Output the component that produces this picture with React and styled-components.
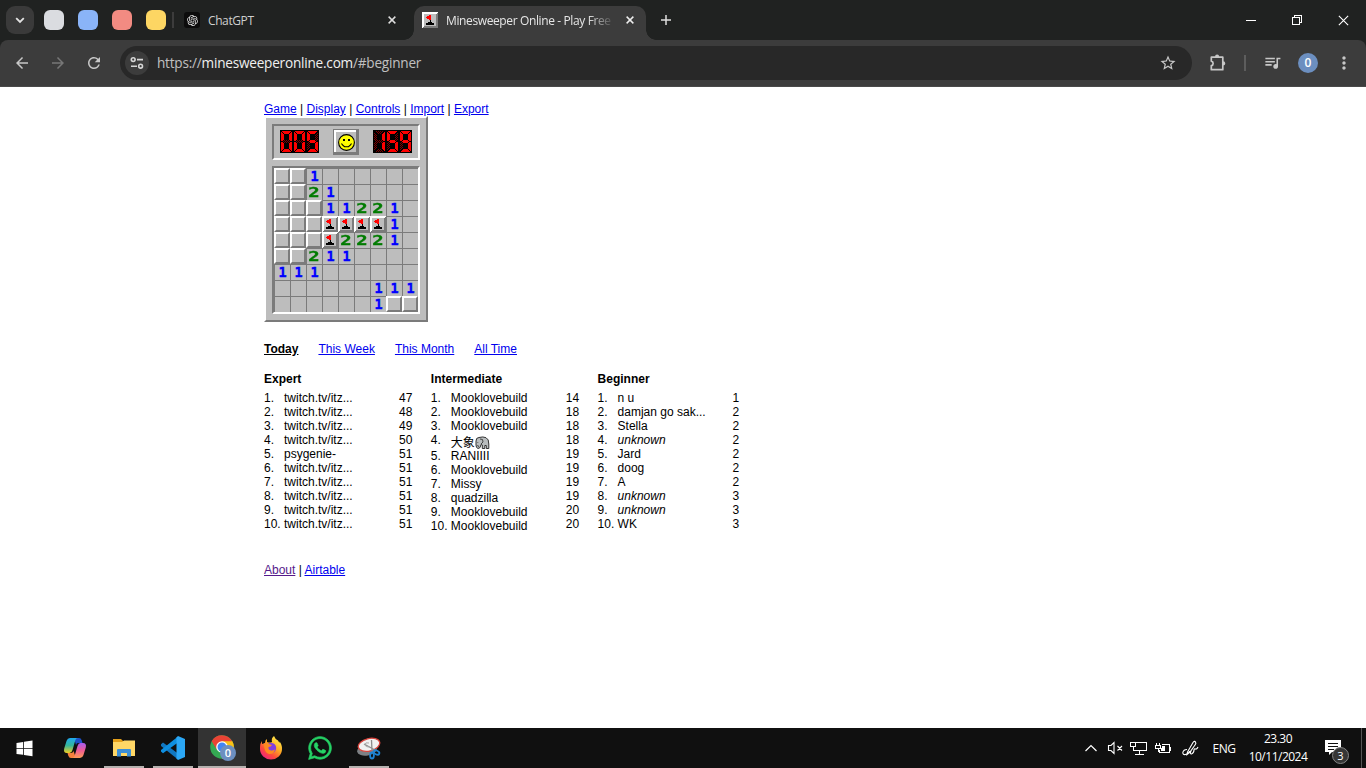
import React from 'react';
import styled, { createGlobalStyle, css } from 'styled-components';
import { MdArrowBack, MdArrowForward, MdRefresh, MdStarBorder, MdQueueMusic, MdMoreVert } from 'react-icons/md';
import { RiOpenaiFill } from 'react-icons/ri';
import { FaWhatsapp } from 'react-icons/fa';

const GlobalStyle = createGlobalStyle`
  * { box-sizing: border-box; }
  body { margin: 0; background: #fff; overflow: hidden; }
  svg { display: block; flex: none; }
`;

const UI = '"Open Sans", "Noto Sans", sans-serif';
const ARIAL = '"Liberation Sans", "Noto Sans CJK SC", sans-serif';

const Screen = styled.div`
  display: flex;
  flex-direction: column;
  width: 1366px;
  height: 768px;
  overflow: hidden;
`;

/* ---------- Tab strip ---------- */
const TabStrip = styled.header`
  display: flex;
  align-items: center;
  height: 40px;
  background: #202221;
  padding-left: 6px;
  font-family: ${UI};
  color: #dcdcdc;
`;
const TabSearch = styled.button`
  display: grid;
  place-items: center;
  width: 28px;
  height: 28px;
  border: 0;
  padding: 0;
  border-radius: 9px;
  background: #3a3a3a;
  margin-right: 10px;
`;
const TabGroup = styled.span`
  width: 20px;
  height: 20px;
  border-radius: 6px;
  background: ${(p) => p.$color};
  margin-right: 14px;
`;
const StripDivider = styled.span`
  width: 2px;
  height: 16px;
  margin-left: -8px;
  margin-right: 10px;
  background: #3c3c3c;
`;
const Tab = styled.div`
  display: flex;
  align-items: center;
  position: relative;
  height: ${(p) => (p.$active ? 34 : 40)}px;
  align-self: flex-end;
  width: ${(p) => (p.$active ? 232 : 230)}px;
  padding-left: ${(p) => (p.$active ? 8 : 0)}px;
  padding-bottom: ${(p) => (p.$active ? 6 : 0)}px;
  border-radius: 10px 10px 0 0;
  background: ${(p) => (p.$active ? '#3c3c3c' : 'transparent')};
  ${(p) =>
    p.$active &&
    css`
      &::before,
      &::after {
        content: '';
        position: absolute;
        bottom: 0;
        width: 10px;
        height: 10px;
      }
      &::before {
        left: -10px;
        background: radial-gradient(circle at 0 0, transparent 9.5px, #3c3c3c 10px);
      }
      &::after {
        right: -10px;
        background: radial-gradient(circle at 100% 0, transparent 9.5px, #3c3c3c 10px);
      }
    `}
`;
const TabTitle = styled.span`
  width: 166px;
  margin-left: 8px;
  overflow: hidden;
  white-space: nowrap;
  font-size: 12px;
  line-height: 18px;
  padding-top: 1px;
  letter-spacing: ${(p) => p.$spacing}px;
  color: ${(p) => (p.$active ? '#e6e6e6' : '#cfcfcf')};
  mask-image: ${(p) => (p.$active ? 'linear-gradient(90deg, #000 142px, transparent 169px)' : 'none')};
`;
const TabClose = styled.span`
  display: grid;
  place-items: center;
  width: 16px;
  margin-left: 10px;
`;
const OpenAiBadge = styled.span`
  display: grid;
  place-items: center;
  width: 16px;
  height: 16px;
  border-radius: 3px;
  background: #0c0c0c;
  color: #e8e8e8;
`;
const NewTab = styled.span`
  display: grid;
  place-items: center;
  width: 28px;
  margin-left: 6px;
`;
const WindowControls = styled.div`
  display: flex;
  margin-left: auto;
`;
const WindowButton = styled.span`
  display: grid;
  place-items: center;
  width: 46px;
  height: 40px;
`;

/* ---------- Toolbar ---------- */
const ToolbarBack = styled.div`
  background: #202221;
`;
const Toolbar = styled.nav`
  display: flex;
  align-items: center;
  height: 47px;
  padding: 0 4px 1px;
  border-radius: 8px 8px 0 0;
  background: #3c3c3c;
  border-bottom: 1px solid #494949;
  color: #c7c7c7;
`;
const ToolButton = styled.span`
  display: grid;
  place-items: center;
  width: 36px;
  height: 34px;
  color: ${(p) => (p.$dim ? '#777' : '#c7c7c7')};
`;
const ToolActions = styled.div`
  display: flex;
  align-items: center;
  margin-left: auto;
`;
const Omnibox = styled.div`
  display: flex;
  align-items: center;
  width: 1072px;
  height: 34px;
  margin-left: 8px;
  padding: 0 6px 0 5px;
  border-radius: 17px;
  background: #282828;
`;
const SiteInfo = styled.span`
  display: grid;
  place-items: center;
  width: 24px;
  height: 24px;
  border-radius: 50%;
  background: #3c3c3c;
`;
const Url = styled.span`
  flex: 1;
  margin-left: 8px;
  font: 13.6px/20px ${UI};
  letter-spacing: -0.22px;
  color: #c0c0c0;
  white-space: nowrap;
  b { font-weight: 400; color: #f0f0f0; }
`;
const ToolDivider = styled.span`
  width: 2px;
  height: 16px;
  margin: 0 8px;
  background: #5d5d5d;
`;
const Avatar = styled.span`
  display: grid;
  place-items: center;
  width: 20px;
  height: 20px;
  border-radius: 50%;
  background: #6c8fc0;
  color: #fff;
  font: 600 12px/20px ${UI};
`;

/* ---------- Page ---------- */
const Page = styled.main`
  flex: 1;
  background: #fff;
  padding: 15px 0 0 264px;
  font: 12px/14px ${ARIAL};
  color: #000;
`;
const LinkRow = styled.div`
  height: 14px;
  white-space: pre;
`;
const PageLink = styled.a`
  color: ${(p) => (p.$visited ? '#551a8b' : '#0000ee')};
  text-decoration: underline;
`;

const raised = css`
  border-style: solid;
  border-width: 2px;
  border-color: #fff #7b7b7b #7b7b7b #fff;
`;
const sunken = css`
  border-style: solid;
  border-width: 2px;
  border-color: #7b7b7b #fff #fff #7b7b7b;
`;
const Board = styled.section`
  ${raised}
  width: 164px;
  height: 206px;
  padding: 6px;
  display: flex;
  flex-direction: column;
  gap: 6px;
  background: #bdbdbd;
`;
const BoardHeader = styled.div`
  ${sunken}
  display: flex;
  justify-content: space-between;
  height: 36px;
  padding: 4px 6px;
`;
const Counter = styled.div`
  display: flex;
  height: 23px;
`;
const FaceButton = styled.button`
  display: grid;
  place-items: center;
  width: 26px;
  height: 26px;
  margin-top: -1px;
  padding: 0;
  border: 1px solid #7b7b7b;
  background: #bdbdbd;
  box-shadow: inset -2px -2px 0 #7b7b7b, inset 2px 2px 0 #fff;
`;
const Field = styled.div`
  ${sunken}
  display: grid;
  grid-template-columns: repeat(9, 16px);
  grid-auto-rows: 16px;
`;
const OpenCell = styled.div`
  border-left: 1px solid #7b7b7b;
  border-top: 1px solid #7b7b7b;
  background: #bdbdbd;
  display: flex;
  justify-content: center;
`;
const CoveredCell = styled.div`
  ${raised}
  background: #bdbdbd;
`;
const CellNumber = styled.span`
  height: 14px;
  font: bold 13.5px/14px "DejaVu Sans Mono", monospace;
  color: ${(p) => (p.$n === '1' ? '#0000ff' : '#007b00')};
  -webkit-text-stroke: 0.4px currentColor;
  transform: ${(p) => (p.$n === '1' ? 'none' : 'scaleX(1.4)')};
`;

/* ---------- Scores ---------- */
const Periods = styled.div`
  display: flex;
  gap: 20px;
  margin-top: 20px;
`;
const CurrentPeriod = styled.b`
  text-decoration: underline;
`;
const ScoreColumns = styled.div`
  display: grid;
  grid-template-columns: repeat(3, 166.8px);
  height: 191px;
  margin-top: 16px;
`;
const ColumnTitle = styled.h2`
  margin: 0 0 5px;
  font-size: 12px;
  line-height: 14px;
`;
const ScoreBody = styled.div`
  display: flex;
`;
const Names = styled.div`
  width: 135px;
`;
const NameRow = styled.div`
  display: flex;
  height: ${(p) => (p.$tall ? 16 : 14)}px;
  white-space: nowrap;
`;
const Rank = styled.span`
  width: 20px;
`;
const PlayerName = styled.span`
  display: flex;
  align-items: ${(p) => (p.$tall ? 'flex-end' : 'stretch')};
  height: ${(p) => (p.$tall ? 17 : 14)}px;
  font-style: ${(p) => (p.$italic ? 'italic' : 'normal')};
  line-height: 14px;
`;

/* ---------- Taskbar ---------- */
const Taskbar = styled.footer`
  display: flex;
  height: 40px;
  background: #101010;
  color: #fff;
  font-family: ${UI};
`;
const TaskButton = styled.span`
  display: grid;
  place-items: center;
  width: 48px;
  height: 40px;
  margin-right: ${(p) => p.$gap ?? 1}px;
  background: ${(p) => (p.$active ? '#333' : 'transparent')};
  box-shadow: ${(p) => (p.$active ? 'inset 0 -2px 0 #b5b1af' : 'none')};
  ${(p) =>
    p.$running &&
    css`
      background: linear-gradient(#b5b1af, #b5b1af) center bottom / 40px 2px no-repeat;
    `}
`;
const Tray = styled.div`
  display: flex;
  align-items: center;
  margin-left: auto;
`;
const TrayItem = styled.span`
  display: grid;
  place-items: center;
  width: ${(p) => p.$w}px;
  height: 40px;
  white-space: nowrap;
`;
const Language = styled.span`
  font-size: 12px;
  letter-spacing: -0.45px;
`;
const Clock = styled.div`
  display: flex;
  flex-direction: column;
  align-items: center;
  width: 70px;
  font-size: 12px;
  line-height: 18px;
  letter-spacing: -0.5px;
  white-space: nowrap;
`;
const Notice = styled.div`
  position: relative;
  width: 48px;
  height: 40px;
  padding: 12px 0 0 12px;
`;
const NoticeCount = styled.span`
  position: absolute;
  left: 19px;
  top: 19px;
  width: 17px;
  height: 17px;
  border: 1px solid #858585;
  border-radius: 50%;
  background: #363636;
  text-align: center;
  font-size: 11px;
  line-height: 15px;
`;
const ShowDesktop = styled.span`
  width: 5px;
  height: 40px;
  border-left: 1px solid #555;
`;

/* ---------- Drawings ---------- */
const Cross = ({ size = 8, color = '#dedede', w = 1.6 }) => (
  <svg width={size} height={size} viewBox="0 0 9 9" stroke={color} strokeWidth={w}>
    <path d="M.7.7l7.6 7.6M8.3.7L.7 8.3" />
  </svg>
);

const FLAG_ROWS = [
  ['#f00', 7, 3, 2], ['#f00', 5, 4, 4], ['#f00', 4, 5, 5], ['#f00', 5, 6, 4], ['#f00', 7, 7, 2],
  ['#000', 8, 8, 1], ['#000', 8, 9, 1], ['#000', 6, 10, 4], ['#000', 4, 11, 8], ['#000', 4, 12, 8],
];
const Flag = () => (
  <svg width="16" height="16" viewBox="0 0 16 16" shapeRendering="crispEdges">
    <path fill="#bdbdbd" d="M0 0h16v16H0z" />
    <path fill="#7b7b7b" d="M16 0v16H0l2-2h12V2z" />
    <path fill="#fff" d="M0 0h16l-2 2H2v12l-2 2z" />
    {FLAG_ROWS.map(([c, x, y, w]) => (
      <rect key={y} x={x} y={y} width={w} height="1" fill={c} />
    ))}
  </svg>
);

const SEGMENTS = {
  a: [[2, 1, 9, 1], [3, 2, 7, 1], [4, 3, 5, 1]],
  b: [[11, 2, 1, 9], [10, 3, 1, 8], [9, 4, 1, 6]],
  c: [[11, 12, 1, 9], [10, 12, 1, 8], [9, 13, 1, 6]],
  d: [[4, 19, 5, 1], [3, 20, 7, 1], [2, 21, 9, 1]],
  e: [[1, 12, 1, 9], [2, 12, 1, 8], [3, 13, 1, 6]],
  f: [[1, 2, 1, 9], [2, 3, 1, 8], [3, 4, 1, 6]],
  g: [[4, 10, 5, 1], [3, 11, 7, 1], [4, 12, 5, 1]],
};
const LIT = { 0: 'abcdef', 1: 'bc', 5: 'acdfg', 9: 'abcdfg' };
const Led = ({ digit }) => (
  <svg width="13" height="23" shapeRendering="crispEdges">
    <defs>
      <pattern id="unlit" width="2" height="2" patternUnits="userSpaceOnUse">
        <path fill="#7b0000" d="M0 0h1v1H0zM1 1h1v1H1z" />
      </pattern>
    </defs>
    <rect width="13" height="23" />
    {Object.entries(SEGMENTS).map(([name, rects]) =>
      rects.map(([x, y, w, h], i) => (
        <rect key={name + i} x={x} y={y} width={w} height={h} fill={LIT[digit].includes(name) ? '#f00' : 'url(#unlit)'} />
      ))
    )}
  </svg>
);

const Smiley = () => (
  <svg width="17" height="17" viewBox="0 0 17 17">
    <circle cx="8.5" cy="8.5" r="7.9" fill="#ff0" stroke="#000" strokeWidth="1.1" />
    <path d="M5 5h2v2H5zM10 5h2v2h-2z" />
    <path d="M3.5 9.5l1 1.5 2 1.7h4l2-1.7 1-1.5" fill="none" stroke="#000" strokeWidth="1.1" />
  </svg>
);

const Elephant = () => (
  <svg width="15" height="14" viewBox="0 0 15 14">
    <path d="M1 5Q1 1.5 4 1.5Q8 .3 11 1.7Q14 3 13.8 8v4.5h-2.5V9.5H9.8v3H7.3V9L6 8.5Q5.5 12.7 3 12.5Q1 12 1 9z" fill="#b9bdbe" stroke="#333" />
    <path d="M5 3q3.5-.5 3 3l-2 2M2.8 6v.8M2.7 9q.2 2 1.2 1.5" fill="none" stroke="#444" />
  </svg>
);

const Puzzle = () => (
  <svg width="20" height="20" viewBox="0 0 20 20" fill="none" stroke="#c7c7c7" strokeWidth="1.7" strokeLinejoin="round">
    <path d="M3.3 4.2h11.500v12.500H3.300v-4a2.300 2.300 0 0 0 0-4.500z" />
    <path d="M7 3.900a2.100 2.300 0 0 1 4.200 0zM15 8.300a2.300 2.100 0 0 1 0 4.200z" fill="#c7c7c7" stroke="none" />
  </svg>
);

const SiteIcon = () => (
  <svg width="14" height="14" viewBox="0 0 14 14" fill="none" stroke="#d5d5d5" strokeWidth="1.6">
    <circle cx="3.2" cy="3.6" r="1.9" /><path d="M7 3.6h6M1 10.2h6" /><circle cx="10.6" cy="10.2" r="1.9" />
  </svg>
);

const WindowsLogo = () => (
  <svg width="17" height="17" viewBox="0 0 17 17" fill="#fff">
    <path d="M.5 3l6.7-1v6H.5zM8 1.8L16.5.6V8H8zM.5 8.8h6.7v6L.5 13.9zM8 8.8h8.5v7.5L8 15z" />
  </svg>
);

const Copilot = () => (
  <svg width="24" height="22" viewBox="0 0 24 22">
    <defs>
      <linearGradient id="cpA" x1="0" y1="0" x2="0" y2="1"><stop stopColor="#1fa9f0" /><stop offset=".5" stopColor="#35b59a" /><stop offset="1" stopColor="#f3cf21" /></linearGradient>
      <linearGradient id="cpB" x1="0" y1="0" x2="0" y2="1"><stop stopColor="#a65cf3" /><stop offset=".5" stopColor="#ee5c93" /><stop offset="1" stopColor="#fd9a55" /></linearGradient>
    </defs>
    <path d="M11 1h5q2 0 2.7 2.3L19.5 6H15q-1.500 0-2 2z" fill="#1c50c8" />
    <path d="M7 1h8q-2 0-2.600 2L9.500 13q-.8 3-3 3H4Q.2 16 1.200 11.500L3.600 3.800Q4.500 1 7 1z" fill="url(#cpA)" />
    <path d="M13 21H8q-2 0-2.700-2.300L4.500 16H8q2 0 2.500-2z" fill="#f5803c" />
    <path d="M17 21H9q2 0 2.600-2l2.900-10q.8-3 3-3H20q3.800 0 2.800 4.500l-2.400 7.700Q19.500 21 17 21z" fill="url(#cpB)" />
  </svg>
);

const Explorer = () => (
  <svg width="24" height="20" viewBox="0 0 24 20">
    <path d="M1 1h8l2 2h11v6H1z" fill="#e5a01a" />
    <path d="M1 4h9l2-1.500h11V18H1z" fill="#ffd766" />
    <path d="M5 18.500V12q0-1 1-1h12q1 0 1 1v6.500h-4V15H9v3.500z" fill="#3c8fd6" />
  </svg>
);

const VsCode = () => (
  <svg width="24" height="24" viewBox="0 0 24 24">
    <path d="M0 8.200l2-1.700L17 17.500V23.500L0 10z" fill="#1177c0" />
    <path d="M0 15.600l2 1.700L17 6.500V.5L0 14z" fill="#0e8fe0" />
    <path d="M17 0l7 3v18l-7 3-1.500-1.500v-21z" fill="#2ba7f5" />
  </svg>
);

const ChromeLogo = () => (
  <svg width="27" height="26" viewBox="0 0 27 26">
    <circle cx="13" cy="12" r="11.800" fill="#34a853" />
    <path d="M13 6h10.200A11.800 11.800 0 0 1 13 23.800L18 14z" fill="#fbc116" />
    <path d="M2.700 6.200A11.800 11.800 0 0 1 23.200 6.300H13L8 15z" fill="#ea4335" />
    <circle cx="13" cy="12" r="5.800" fill="#fff" /><circle cx="13" cy="12" r="4.500" fill="#4285f4" />
    <circle cx="19" cy="18" r="8" fill="#6c8fc0" />
    <text x="19" y="22" textAnchor="middle" fill="#fff" fontFamily="Open Sans" fontWeight="600" fontSize="11">0</text>
  </svg>
);

const Firefox = () => (
  <svg width="24" height="24" viewBox="0 0 24 24">
    <defs>
      <linearGradient id="ff" x1=".85" y1=".05" x2=".2" y2=".95"><stop stopColor="#fff14f" /><stop offset=".4" stopColor="#ffab24" /><stop offset=".72" stopColor="#ff4b3a" /><stop offset="1" stopColor="#ef247d" /></linearGradient>
    </defs>
    <path d="M1 11Q1 7.500 3 5v3l3-1Q6 4 8 3v3q3 1 5 0Q12 2 15 0q1 3 4 4.500Q20 6 20.500 7V5.500Q23 8 23 13a11 10.500 0 0 1-22 0z" fill="url(#ff)" />
    <circle cx="12" cy="12" r="5.200" fill="#803de0" />
    <path d="M5 7.500q3-1 5.500.7L13 9q-1 2-3.500 2Q9 14 12 14.500q2 .3 4-1-1 5-6 4.500-5-1-5-10.500z" fill="#ff8a20" />
  </svg>
);

const Snip = () => (
  <svg width="25" height="23" viewBox="0 0 25 23">
    <ellipse cx="10" cy="13" rx="10" ry="5.500" fill="#7d8084" transform="rotate(-10 10 13)" />
    <ellipse cx="12" cy="7.800" rx="11" ry="6.200" fill="#f1f1f1" stroke="#d8443c" strokeWidth="1.300" transform="rotate(-14 12 7.800)" />
    <path d="M7 7l11 6M14.500 3L15 14" stroke="#8c8c8c" strokeWidth="1.300" />
    <path d="M12 6q-4-1-4 1.500t5 2.500" stroke="#aaa" fill="none" />
    <g fill="none" stroke="#1d83d4" strokeWidth="1.800"><ellipse cx="15" cy="18.500" rx="1.900" ry="3" /><ellipse cx="19.500" cy="15.500" rx="3" ry="1.900" transform="rotate(25 19.500 15.500)" /></g>
  </svg>
);

const Speaker = () => (
  <svg width="16" height="14" viewBox="0 0 16 14" fill="none" stroke="#fff" strokeWidth="1.100">
    <path d="M1.500 4.500H4l3-3v11l-3-3H1.500zM10.500 5l4.500 4.500M15 5l-4.500 4.500" />
  </svg>
);
const Network = () => (
  <svg width="17" height="15" viewBox="0 0 17 15" fill="none" stroke="#fff" shapeRendering="crispEdges">
    <path d="M5.500 1.500h11v8h-13V7M9.500 9.500v3.500M5 13.500h9M.5 1.500h5v4h-5zM3.500 5v3" />
  </svg>
);
const Battery = () => (
  <svg width="17" height="13" viewBox="0 0 17 13" fill="none" stroke="#fff" shapeRendering="crispEdges">
    <path d="M6.500 2.500h8v8h-10V8M15.500 4.500v4M.5 3.500h5v3h-5zM1.500 1v2M4.500 1v2M3.500 7v3" />
    <path d="M7 4h3v5H6V6h1z" fill="#fff" stroke="none" />
  </svg>
);
const Pen = () => (
  <svg width="17" height="17" viewBox="0 0 17 17" fill="none" stroke="#fff" strokeWidth="1.100">
    <path d="M5.500 12L11 2.500q1.500-2 2.500-.5t-.5 3L8 12l-3 2.500zM5 9.500q-3.500 0-4.200 3 0 2.500 2.700 2 3-1 4.500-3.500M9 11q-1.500 3 .5 3 2.500-1 2.500-4 0-1.500 1.500-1t2.500-2" />
  </svg>
);

/* ---------- Data ---------- */
const FIELD = [
  '##1......',
  '##21.....',
  '###11221.',
  '###FFFF1.',
  '###F2221.',
  '##211....',
  '111......',
  '......111',
  '......1##',
];

const BOARDS = [
  {
    title: 'Expert',
    names: ['twitch.tv/itz...', 'twitch.tv/itz...', 'twitch.tv/itz...', 'twitch.tv/itz...', 'psygenie-', 'twitch.tv/itz...', 'twitch.tv/itz...', 'twitch.tv/itz...', 'twitch.tv/itz...', 'twitch.tv/itz...'],
    scores: [47, 48, 49, 50, 51, 51, 51, 51, 51, 51],
  },
  {
    title: 'Intermediate',
    names: ['Mooklovebuild', 'Mooklovebuild', 'Mooklovebuild', '大象', 'RANIIII', 'Mooklovebuild', 'Missy', 'quadzilla', 'Mooklovebuild', 'Mooklovebuild'],
    scores: [14, 18, 18, 18, 19, 19, 19, 19, 20, 20],
  },
  {
    title: 'Beginner',
    names: ['n u', 'damjan go sak...', 'Stella', 'unknown', 'Jard', 'doog', 'A', 'unknown', 'unknown', 'WK'],
    scores: [1, 2, 2, 2, 2, 2, 2, 3, 3, 3],
  },
];

function Cell({ kind }) {
  if (kind === '#') return <CoveredCell />;
  if (kind === 'F') return <Flag />;
  return <OpenCell>{kind !== '.' && <CellNumber $n={kind}>{kind}</CellNumber>}</OpenCell>;
}

function Leaderboard({ board }) {
  return (
    <div>
      <ColumnTitle>{board.title}</ColumnTitle>
      <ScoreBody>
        <Names>
          {board.names.map((name, i) => {
            const tall = name === '大象';
            return (
              <NameRow key={i} $tall={tall}>
                <Rank>{i + 1}.</Rank>
                <PlayerName $italic={name === 'unknown'} $tall={tall}>
                  {name}
                  {tall && <Elephant />}
                </PlayerName>
              </NameRow>
            );
          })}
        </Names>
        <div>
          {board.scores.map((s, i) => (
            <div key={i}>{s}</div>
          ))}
        </div>
      </ScoreBody>
    </div>
  );
}

export default function App() {
  return (
    <Screen>
      <GlobalStyle />
      <TabStrip>
        <TabSearch>
          <svg width="10" height="7" viewBox="0 0 10 7" fill="none" stroke="#e3e3e3" strokeWidth="1.8"><path d="M1.2 1.2L5 5l3.800-3.800" /></svg>
        </TabSearch>
        {['#dadce0', '#8ab4f8', '#f28b82', '#fdd663'].map((c) => (
          <TabGroup key={c} $color={c} />
        ))}
        <StripDivider />
        <Tab>
          <OpenAiBadge><RiOpenaiFill size={13} /></OpenAiBadge>
          <TabTitle $spacing={-0.4}>ChatGPT</TabTitle>
          <TabClose><Cross /></TabClose>
        </Tab>
        <Tab $active>
          <Flag />
          <TabTitle $active $spacing={-0.38}>Minesweeper Online - Play Free</TabTitle>
          <TabClose><Cross color="#eee" /></TabClose>
        </Tab>
        <NewTab>
          <svg width="12" height="12" viewBox="0 0 12 12" stroke="#dedede" strokeWidth="1.5"><path d="M6 1v10M1 6h10" /></svg>
        </NewTab>
        <WindowControls>
          <WindowButton><svg width="10" height="1"><rect width="10" height="1" fill="#fff" /></svg></WindowButton>
          <WindowButton>
            <svg width="10" height="10" viewBox="0 0 10 10" fill="none" stroke="#fff" shapeRendering="crispEdges"><path d="M.5 2.500h7v7h-7zM2.500 2V.5h7v7H8" /></svg>
          </WindowButton>
          <WindowButton><Cross size={11} color="#fff" w={0.9} /></WindowButton>
        </WindowControls>
      </TabStrip>

      <ToolbarBack>
        <Toolbar>
          <ToolButton><MdArrowBack size={18} /></ToolButton>
          <ToolButton $dim><MdArrowForward size={18} /></ToolButton>
          <ToolButton><MdRefresh size={18} /></ToolButton>
          <Omnibox>
            <SiteInfo><SiteIcon /></SiteInfo>
            <Url>https://<b>minesweeperonline.com</b>/#beginner</Url>
            <ToolButton><MdStarBorder size={18} /></ToolButton>
          </Omnibox>
          <ToolActions>
            <ToolButton><Puzzle /></ToolButton>
            <ToolDivider />
            <ToolButton><MdQueueMusic size={19} /></ToolButton>
            <ToolButton><Avatar>0</Avatar></ToolButton>
            <ToolButton><MdMoreVert size={20} /></ToolButton>
          </ToolActions>
        </Toolbar>
      </ToolbarBack>

      <Page>
        <LinkRow>
          <PageLink>Game</PageLink> | <PageLink>Display</PageLink> | <PageLink>Controls</PageLink> | <PageLink>Import</PageLink> | <PageLink>Export</PageLink>
        </LinkRow>
        <Board>
          <BoardHeader>
            <Counter>{[0, 0, 5].map((d, i) => <Led key={i} digit={d} />)}</Counter>
            <FaceButton><Smiley /></FaceButton>
            <Counter>{[1, 5, 9].map((d, i) => <Led key={i} digit={d} />)}</Counter>
          </BoardHeader>
          <Field>
            {FIELD.map((row, y) => [...row].map((k, x) => <Cell key={`${x}-${y}`} kind={k} />))}
          </Field>
        </Board>
        <Periods>
          <CurrentPeriod>Today</CurrentPeriod>
          <PageLink>This Week</PageLink>
          <PageLink>This Month</PageLink>
          <PageLink>All Time</PageLink>
        </Periods>
        <ScoreColumns>
          {BOARDS.map((b) => <Leaderboard key={b.title} board={b} />)}
        </ScoreColumns>
        <LinkRow>
          <PageLink $visited>About</PageLink> | <PageLink>Airtable</PageLink>
        </LinkRow>
      </Page>

      <Taskbar>
        <TaskButton $gap={3}><WindowsLogo /></TaskButton>
        <TaskButton><Copilot /></TaskButton>
        <TaskButton $running><Explorer /></TaskButton>
        <TaskButton $running><VsCode /></TaskButton>
        <TaskButton $active><ChromeLogo /></TaskButton>
        <TaskButton><Firefox /></TaskButton>
        <TaskButton><FaWhatsapp size={26} color="#25d366" strokeWidth={14} /></TaskButton>
        <TaskButton $running><Snip /></TaskButton>
        <Tray>
          <TrayItem $w={24}>
            <svg width="12" height="8" viewBox="0 0 12 8" fill="none" stroke="#fff" strokeWidth="1.200"><path d="M.5 7L6 1.500 11.500 7" /></svg>
          </TrayItem>
          <TrayItem $w={23}><Speaker /></TrayItem>
          <TrayItem $w={25}><Network /></TrayItem>
          <TrayItem $w={24}><Battery /></TrayItem>
          <TrayItem $w={30}><Pen /></TrayItem>
          <TrayItem $w={38}><Language>ENG</Language></TrayItem>
          <Clock><span>23.30</span><span>10/11/2024</span></Clock>
          <Notice>
            <svg width="16" height="16" viewBox="0 0 16 16"><path fill="#fff" d="M0 0h16v12H7l-3 3v-3H0z" /><path stroke="#101010" d="M3 3.500h10M3 6.500h10M3 9.500h6" /></svg>
            <NoticeCount>3</NoticeCount>
          </Notice>
          <ShowDesktop />
        </Tray>
      </Taskbar>
    </Screen>
  );
}
